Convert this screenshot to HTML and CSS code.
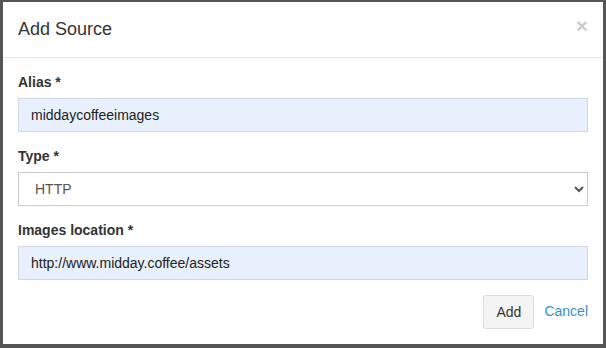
FILE: index.html
```html
<html lang="en">
    <head>
        <title>Add Source</title>
        <link rel="stylesheet" href="styles.css">
    </head>
    <body>
        <div class="modal">
            <div class="modal-header">
                <button class="close" type="button">&times;</button>
                <h4 class="modal-title">Add Source</h4>
            </div>
            <form class="modal-body">
                <div class="form-group">
                    <label for="alias">Alias *</label>
                    <input id="alias" class="form-control filled" type="text" value="middaycoffeeimages">
                </div>
                <div class="form-group">
                    <label for="type">Type *</label>
                    <select id="type" class="form-control">
                        <option>HTTP</option>
                        <option>S3</option>
                    </select>
                </div>
                <div class="form-group">
                    <label for="location">Images location *</label>
                    <input id="location" class="form-control filled" type="text" value="http://www.midday.coffee/assets">
                </div>
                <div class="actions">
                    <button class="btn" type="button">Add</button>
                    <a class="cancel" href="#">Cancel</a>
                </div>
            </form>
        </div>
    </body>
</html>
```

FILE: styles.css
```css
* {
    box-sizing: border-box;
}

body {
    background-color: #555;
    margin: 0;
    padding: 2px 3px;
    width: 100vw;
    height: 100vh;
    font-family: "Liberation Sans", Arial, sans-serif;
    font-size: 14px;
    line-height: 1.42857;
    color: #333;
}

.modal {
    background-color: #fff;
    width: 600px;
}

.modal-header {
    padding: 15px;
    border-bottom: 1px solid #e5e5e5;
}

.modal-title {
    margin: 0;
    font-size: 18px;
    font-weight: normal;
    line-height: 25px;
}

.close {
    float: right;
    margin-top: -2px;
    padding: 0;
    border: 0;
    background: transparent;
    font-family: "Liberation Sans", Arial, sans-serif;
    font-size: 21px;
    font-weight: bold;
    line-height: 1;
    color: #000;
    opacity: 0.2;
}

.modal-body {
    display: block;
    margin: 0;
    padding: 15px;
}

.form-group {
    margin-bottom: 15px;
}

label {
    display: block;
    margin-bottom: 5px;
    font-weight: bold;
}

.form-control {
    display: block;
    width: 100%;
    height: 34px;
    padding: 6px 12px;
    font-family: "Liberation Sans", Arial, sans-serif;
    font-size: 14px;
    color: #555;
    background-color: #fff;
    border: 1px solid #ccc;
    border-radius: 0;
}

.filled {
    background-color: #e8f0fe;
    border-color: #cfd8e3;
    color: #222;
}

.actions {
    display: flex;
    justify-content: flex-end;
    align-items: center;
}

.btn {
    height: 34px;
    padding: 6px 12px;
    font-family: "Liberation Sans", Arial, sans-serif;
    font-size: 14px;
    color: #333;
    background-color: #f4f4f4;
    border: 1px solid #ddd;
    border-radius: 3px;
}

.cancel {
    margin-left: 10px;
    color: #3a8fc8;
    text-decoration: none;
}
```
